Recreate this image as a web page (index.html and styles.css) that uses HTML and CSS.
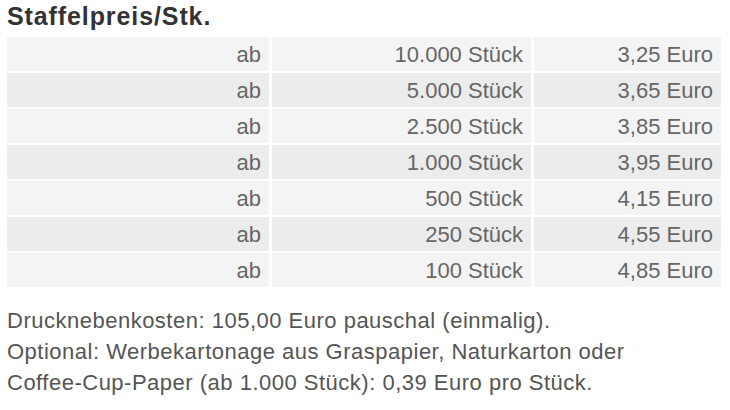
FILE: index.html
```html
<!DOCTYPE html>
<html lang="de">
<head>
<meta charset="utf-8">
<link rel="stylesheet" href="styles.css">
</head>
<body>
<div class="page">
  <h2 class="title">Staffelpreis/Stk.</h2>
  <div class="prices">
    <div class="row"><div class="cell">ab</div><div class="cell">10.000 Stück</div><div class="cell">3,25 Euro</div></div>
    <div class="row"><div class="cell">ab</div><div class="cell">5.000 Stück</div><div class="cell">3,65 Euro</div></div>
    <div class="row"><div class="cell">ab</div><div class="cell">2.500 Stück</div><div class="cell">3,85 Euro</div></div>
    <div class="row"><div class="cell">ab</div><div class="cell">1.000 Stück</div><div class="cell">3,95 Euro</div></div>
    <div class="row"><div class="cell">ab</div><div class="cell">500 Stück</div><div class="cell">4,15 Euro</div></div>
    <div class="row"><div class="cell">ab</div><div class="cell">250 Stück</div><div class="cell">4,55 Euro</div></div>
    <div class="row"><div class="cell">ab</div><div class="cell">100 Stück</div><div class="cell">4,85 Euro</div></div>
  </div>
  <p class="note">Drucknebenkosten: 105,00 Euro pauschal (einmalig).<br>Optional: Werbekartonage aus Graspapier, Naturkarton oder<br>Coffee-Cup-Paper (ab 1.000 Stück): 0,39 Euro pro Stück.</p>
</div>
</body>
</html>
```

FILE: styles.css
```css
html, body {
  margin: 0;
  padding: 0;
  background: #fff;
}
.page {
  padding: 1px 9px 0 7px;
  font-family: "Liberation Sans", Arial, sans-serif;
}
.title {
  margin: 0;
  font-size: 25px;
  line-height: 31px;
  font-weight: bold;
  color: #333;
  letter-spacing: 0.9px;
}
.prices {
  margin-top: 5px;
  display: flex;
  flex-direction: column;
  gap: 2px;
}
.row {
  display: grid;
  grid-template-columns: 262px 259px 187px;
  column-gap: 3px;
}
.row:nth-child(odd) .cell {
  background: #f4f4f4;
}
.row:nth-child(even) .cell {
  background: #ececec;
}
.cell {
  height: 34px;
  line-height: 35px;
  text-align: right;
  padding-right: 8px;
  font-size: 22px;
  color: #666;
}
.note {
  margin: 18px 0 0;
  font-size: 22px;
  line-height: 31px;
  letter-spacing: 0.5px;
  color: #555;
}
```
